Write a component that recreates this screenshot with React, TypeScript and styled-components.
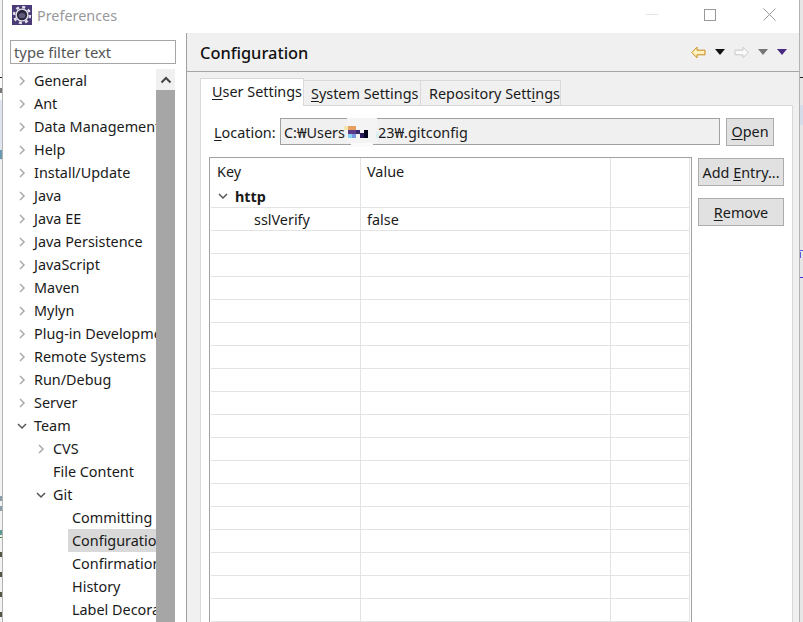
import React from "react";
import styled, { createGlobalStyle } from "styled-components";

const Global = createGlobalStyle`
  html, body { margin: 0; padding: 0; background: #fff; overflow: hidden; }
  * { box-sizing: border-box; }
`;

const Screen = styled.div`
  display: flex;
  width: 803px;
  height: 622px;
  overflow: hidden;
  font-family: "Noto Sans", "Open Sans", sans-serif;
  font-size: 14.4px;
  color: #1a1a1a;
  background: #fff;
`;
const EdgeLeft = styled.svg`
  width: 3px;
  height: 622px;
  flex: none;
  display: block;
`;
const EdgeRight = styled.svg`
  width: 4px;
  height: 622px;
  flex: none;
  display: block;
`;
const Window = styled.div`
  flex: 1;
  min-width: 0;
  display: flex;
  flex-direction: column;
`;
const TitleBar = styled.div`
  height: 33px;
  flex: none;
  display: flex;
  align-items: center;
  padding: 4px 0 8px 9px;
  gap: 5px;
  background: #fff;
`;
const TitleText = styled.span`
  color: #999;
  font-size: 14.4px;
  margin-top: 1px;
`;
const WinButtons = styled.div`
  margin-left: auto;
  display: flex;
  align-items: center;
  gap: 46px;
  padding-right: 23px;
`;
const Body = styled.div`
  flex: 1;
  display: flex;
  min-height: 0;
`;
const Left = styled.div`
  width: 184px;
  flex: none;
  display: flex;
  flex-direction: column;
  padding: 7px 0 0 7px;
  border-right: 1px solid #a0a0a0;
  background: #fff;
`;
const Filter = styled.div`
  width: 166px;
  height: 24px;
  flex: none;
  border: 1px solid #a6a6a6;
  padding-left: 3px;
  line-height: 22px;
  color: #555;
  font-size: 14.8px;
`;
const TreeWrap = styled.div`
  flex: 1;
  display: flex;
  margin-top: 5px;
  width: 165px;
  min-height: 0;
`;
const Tree = styled.div`
  flex: 1;
  min-width: 0;
  overflow: hidden;
`;
const TreeRow = styled.div<{ $level: number }>`
  height: 23px;
  display: flex;
  align-items: center;
  white-space: nowrap;
  overflow: hidden;
  padding-left: ${(p) => 5 + p.$level * 19}px;
`;
const TreeLabel = styled.span<{ $selected?: boolean }>`
  flex: 1;
  height: 23px;
  line-height: 24px;
  padding-left: 4px;
  margin-left: 1px;
  overflow: hidden;
  background: ${(p) => (p.$selected ? "#d9d9d9" : "transparent")};
`;
const Twisty = styled.span`
  width: 14px;
  height: 12px;
  flex: none;
  margin-top: 1px;
  display: flex;
  align-items: center;
  justify-content: center;
`;
const ScrollBar = styled.div`
  width: 19px;
  flex: none;
  display: flex;
  flex-direction: column;
  background: #f0f0f0;
`;
const ScrollUp = styled.div`
  height: 21px;
  flex: none;
  display: flex;
  align-items: center;
  justify-content: center;
`;
const ScrollThumb = styled.div`
  flex: 1;
  background: #a6a6a6;
`;
const Right = styled.div`
  flex: 1;
  min-width: 0;
  display: flex;
  flex-direction: column;
  background: #f0f0f0;
`;
const Header = styled.div`
  height: 39px;
  flex: none;
  display: flex;
  align-items: center;
  padding: 0 12px 0 13px;
  border-bottom: 1px solid #a6a6a6;
`;
const HeaderTitle = styled.div`
  font-size: 16.4px;
  font-weight: 500;
  color: #111;
`;
const NavIcons = styled.div`
  margin-left: auto;
  display: flex;
  align-items: center;
  gap: 9px;
`;
const Content = styled.div`
  flex: 1;
  min-height: 0;
  padding: 6px 6px 0 13px;
  display: flex;
  flex-direction: column;
`;
const Tabs = styled.div`
  height: 28px;
  flex: none;
  display: flex;
  align-items: flex-end;
  margin-bottom: -1px;
  position: relative;
  z-index: 1;
`;
const Tab = styled.div<{ $active?: boolean; $w: number; $pad: number }>`
  width: ${(p) => p.$w}px;
  height: ${(p) => (p.$active ? 28 : 26)}px;
  padding-left: ${(p) => p.$pad}px;
  line-height: ${(p) => (p.$active ? 26 : 25)}px;
  white-space: nowrap;
  background: ${(p) => (p.$active ? "#fff" : "#f0f0f0")};
  border: 1px solid #d9d9d9;
  border-bottom: ${(p) => (p.$active ? "none" : "1px solid #d9d9d9")};
  margin-left: ${(p) => (p.$active ? 0 : -1)}px;
`;
const Panel = styled.div`
  flex: 1;
  min-height: 0;
  background: #fff;
  border: 1px solid #d9d9d9;
  border-bottom: none;
  padding: 12px 17px 0 8px;
  display: flex;
  flex-direction: column;
`;
const LocationRow = styled.div`
  height: 27px;
  flex: none;
  display: flex;
  align-items: center;
  padding-left: 5px;
  gap: 4px;
  position: relative;
`;
const LocationLabel = styled.span`
  width: 62px;
  flex: none;
  margin-top: 2px;
`;
const LocationField = styled.div`
  width: 440px;
  height: 27px;
  display: flex;
  background: #f0f0f0;
  border: 1px solid #a0a0a0;
  padding-left: 3px;
  line-height: 27px;
  white-space: nowrap;
`;
const PathStart = styled.span`
  width: 94px;
  flex: none;
`;
const Redaction = styled.svg`
  position: absolute;
  left: 135px;
  top: 0;
`;
const Button = styled.div<{ $w: number }>`
  width: ${(p) => p.$w}px;
  height: 28px;
  flex: none;
  display: flex;
  align-items: center;
  justify-content: center;
  background: #e1e1e1;
  border: 1px solid #adadad;
  white-space: nowrap;
`;
const OpenSlot = styled.div`
  margin-left: 2px;
`;
const Main = styled.div`
  flex: 1;
  min-height: 0;
  display: flex;
  gap: 6px;
  margin-top: 12px;
`;
const Table = styled.div`
  width: 483px;
  flex: none;
  border: 1px solid #a0a0a0;
  border-bottom: none;
  overflow: hidden;
  padding: 0 1px;
`;
const Cols = "150px 250px 1fr";
const HeadRow = styled.div`
  display: grid;
  grid-template-columns: ${Cols};
  height: 27px;
`;
const Row = styled.div`
  display: grid;
  grid-template-columns: ${Cols};
  height: 23px;
  border-bottom: 1px solid #e3e3e3;
`;
const Cell = styled.div<{ $indent?: number; $bold?: boolean }>`
  border-right: 1px solid #e3e3e3;
  padding-left: ${(p) => p.$indent ?? 6}px;
  font-weight: ${(p) => (p.$bold ? 700 : 400)};
  display: flex;
  align-items: center;
  gap: 6px;
  white-space: nowrap;
`;
const SideButtons = styled.div`
  display: flex;
  flex-direction: column;
  gap: 12px;
  padding-top: 1px;
`;
const U = styled.span`
  text-decoration: underline;
  text-underline-offset: 2px;
`;

const Chevron = ({ open, color = "#555" }: { open?: boolean; color?: string }) => (
  <svg width="12" height="12" viewBox="0 0 12 12" fill="none">
    <path d={open ? "M2 4l4 4 4-4" : "M4 2l4 4-4 4"} stroke={color} strokeWidth="1.5" />
  </svg>
);

const BackArrow = () => (
  <svg width="15" height="13" viewBox="0 0 15 13">
    <path d="M.8 6.5L6 1.2v3h8v4.6H6v3z" fill="#fff0c0" stroke="#c98a14" strokeWidth="1" />
  </svg>
);
const ForwardArrow = () => (
  <svg width="15" height="13" viewBox="0 0 15 13">
    <path d="M14.2 6.5L9 1.2v3H1v4.6h8v3z" fill="#fafafa" stroke="#c8c8c8" strokeWidth="1" />
  </svg>
);

const Drop = ({ color }: { color: string }) => (
  <svg width="10" height="6" viewBox="0 0 10 6">
    <path d="M0 0h10L5 6z" fill={color} />
  </svg>
);

const AppIcon = () => (
  <svg width="20" height="20" viewBox="0 0 20 20">
    <rect width="20" height="20" fill="#4a3a78" />
    <circle cx="10" cy="10" r="8" fill="none" stroke="#e4e4e8" strokeWidth="2.4" strokeDasharray="3 3.28" />
    <circle cx="10" cy="10" r="6.6" fill="#e4e4e8" />
    <circle cx="10" cy="10" r="5.2" fill="#2a2440" />
    <ellipse cx="10" cy="10.6" rx="3.4" ry="2.6" fill="#5f5a78" />
  </svg>
);

const LeftStrip = () => (
  <EdgeLeft viewBox="0 0 3 622">
    <rect width="3" height="622" fill="#f2f2f2" />
    <rect y="40" width="2" height="60" fill="#fafafa" />
    <rect y="100" width="2" height="60" fill="#dfe5ee" />
    <rect y="77" width="2" height="1" fill="#222" />
    <rect y="88" width="2" height="5" fill="#777" />
    <rect y="150" width="2" height="9" fill="#6a9ab0" />
    <rect y="496" width="2" height="5" fill="#8aa0a8" />
    <rect y="506" width="2" height="5" fill="#8aa0a8" />
    <rect y="530" width="2" height="5" fill="#5a9a90" />
    <rect y="537" width="2" height="1" fill="#4a8a50" />
    <rect y="552" width="2" height="5" fill="#554" />
    <rect y="572" width="2" height="5" fill="#554" />
    <rect y="592" width="2" height="5" fill="#554" />
    <rect y="612" width="2" height="5" fill="#554" />
    <rect x="2" width="1" height="622" fill="#b4b4b4" />
  </EdgeLeft>
);

const RightStrip = () => (
  <EdgeRight viewBox="0 0 4 622">
    <rect width="4" height="622" fill="#e6e6e6" />
    <rect x="1" y="105" width="3" height="20" fill="#d4dcea" />
    <rect x="1" y="77" width="3" height="1" fill="#222" />
    <rect x="1" y="250" width="3" height="1" fill="#5a5ae0" />
    <rect x="1" y="252" width="1" height="6" fill="#5a5ae0" />
    <rect x="1" y="277" width="3" height="1" fill="#4a2ae0" />
    <rect width="1" height="622" fill="#b4b4b4" />
  </EdgeRight>
);

type Item = { label: string; level: number; open?: boolean; leaf?: boolean; selected?: boolean };

const items: Item[] = [
  { label: "General", level: 0 },
  { label: "Ant", level: 0 },
  { label: "Data Management", level: 0 },
  { label: "Help", level: 0 },
  { label: "Install/Update", level: 0 },
  { label: "Java", level: 0 },
  { label: "Java EE", level: 0 },
  { label: "Java Persistence", level: 0 },
  { label: "JavaScript", level: 0 },
  { label: "Maven", level: 0 },
  { label: "Mylyn", level: 0 },
  { label: "Plug-in Development", level: 0 },
  { label: "Remote Systems", level: 0 },
  { label: "Run/Debug", level: 0 },
  { label: "Server", level: 0 },
  { label: "Team", level: 0, open: true },
  { label: "CVS", level: 1 },
  { label: "File Content", level: 1, leaf: true },
  { label: "Git", level: 1, open: true },
  { label: "Committing", level: 2, leaf: true },
  { label: "Configuration", level: 2, leaf: true, selected: true },
  { label: "Confirmations", level: 2, leaf: true },
  { label: "History", level: 2, leaf: true },
  { label: "Label Decorations", level: 2, leaf: true },
];

export default function App() {
  return (
    <Screen>
      <Global />
      <LeftStrip />
      <Window>
        <TitleBar>
          <AppIcon />
          <TitleText>Preferences</TitleText>
          <WinButtons>
            <svg width="12" height="12"><rect y="5" width="12" height="1" fill="#e4e4e4" /></svg>
            <svg width="12" height="12"><rect x=".5" y=".5" width="11" height="11" fill="none" stroke="#999" /></svg>
            <svg width="14" height="13"><path d="M1.5.5l12 12M13.5.5l-12 12" stroke="#999" fill="none" /></svg>
          </WinButtons>
        </TitleBar>
        <Body>
          <Left>
            <Filter>type filter text</Filter>
            <TreeWrap>
              <Tree>
                {items.map((it) => (
                  <TreeRow key={it.label} $level={it.level}>
                    <Twisty>
                      {!it.leaf && <Chevron open={it.open} color={it.open ? "#555" : "#aaa"} />}
                    </Twisty>
                    <TreeLabel $selected={it.selected}>{it.label}</TreeLabel>
                  </TreeRow>
                ))}
              </Tree>
              <ScrollBar>
                <ScrollUp>
                  <svg width="12" height="8" viewBox="0 0 12 8" fill="none">
                    <path d="M1.5 6.5L6 2l4.5 4.5" stroke="#444" strokeWidth="2" />
                  </svg>
                </ScrollUp>
                <ScrollThumb />
              </ScrollBar>
            </TreeWrap>
          </Left>
          <Right>
            <Header>
              <HeaderTitle>Configuration</HeaderTitle>
              <NavIcons>
                <BackArrow />
                <Drop color="#111" />
                <ForwardArrow />
                <Drop color="#777" />
                <Drop color="#4a2a80" />
              </NavIcons>
            </Header>
            <Content>
              <Tabs>
                <Tab $active $w={104} $pad={11}><U>U</U>ser Settings</Tab>
                <Tab $w={118} $pad={7}><U>S</U>ystem Settings</Tab>
                <Tab $w={141} $pad={8}>Repository Sett<U>i</U>ngs</Tab>
              </Tabs>
              <Panel>
                <LocationRow>
                  <LocationLabel><U>L</U>ocation:</LocationLabel>
                  <LocationField>
                    <PathStart>C:₩Users</PathStart>
                    <span>23₩.gitconfig</span>
                  </LocationField>
                  <Redaction width="36" height="29" viewBox="0 0 36 29">
                    <rect x="3" width="30" height="25" fill="#f4f4f4" />
                    <rect x="7" y="25" width="22" height="4" fill="#fbfbfb" />
                    <rect y="8" width="4" height="4" fill="#f5e6b0" />
                    <rect x="4" y="8" width="8" height="4" fill="#e8a060" />
                    <rect x="4" y="12" width="8" height="4" fill="#5a3a8a" />
                    <rect x="12" y="12" width="4" height="4" fill="#3a2a6a" />
                    <rect x="4" y="16" width="4" height="4" fill="#8ad0f0" />
                    <rect x="8" y="16" width="4" height="4" fill="#7a9ae0" />
                    <rect x="16" y="15" width="4" height="5" fill="#2a1a5a" />
                    <rect x="20" y="12" width="4" height="8" fill="#050520" />
                    <rect x="32" y="14" width="3" height="6" fill="#d8f0f0" />
                  </Redaction>
                  <OpenSlot><Button $w={48}><span><U>O</U>pen</span></Button></OpenSlot>
                </LocationRow>
                <Main>
                  <Table>
                    <HeadRow>
                      <Cell>Key</Cell>
                      <Cell>Value</Cell>
                      <Cell />
                    </HeadRow>
                    <Row>
                      <Cell $bold>
                        <Chevron open />
                        http
                      </Cell>
                      <Cell />
                      <Cell />
                    </Row>
                    <Row>
                      <Cell $indent={43}>sslVerify</Cell>
                      <Cell>false</Cell>
                      <Cell />
                    </Row>
                    {Array.from({ length: 17 }, (_, i) => (
                      <Row key={i}>
                        <Cell />
                        <Cell />
                        <Cell />
                      </Row>
                    ))}
                  </Table>
                  <SideButtons>
                    <Button $w={86}><span>Add <U>E</U>ntry...</span></Button>
                    <Button $w={86}><span><U>R</U>emove</span></Button>
                  </SideButtons>
                </Main>
              </Panel>
            </Content>
          </Right>
        </Body>
      </Window>
      <RightStrip />
    </Screen>
  );
}
